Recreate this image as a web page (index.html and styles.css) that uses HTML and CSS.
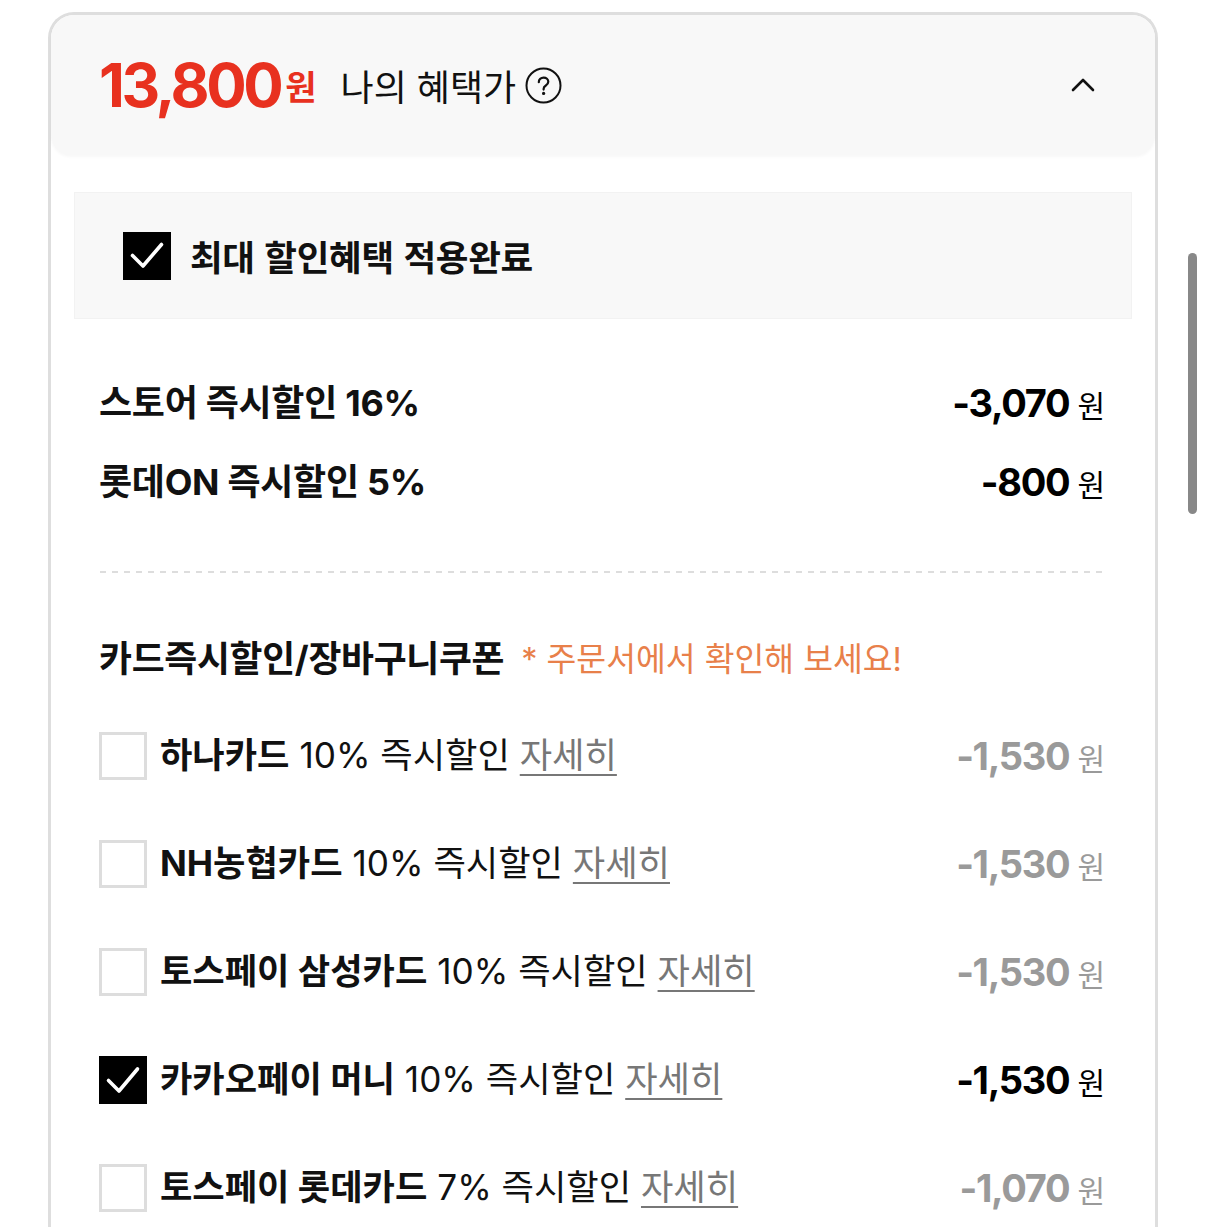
FILE: index.html
```html
<!DOCTYPE html>
<html lang="ko">
<head>
<meta charset="utf-8">
<title>나의 혜택가</title>
<link rel="stylesheet" href="styles.css">
</head>
<body>
<div class="card">
  <div class="summary">
    <span class="price"><span class="price-num">13,800</span><span class="price-won">원</span></span>
    <span class="summary-label">나의 혜택가</span>
    <svg class="help" width="37" height="37" viewBox="0 0 37 37" aria-hidden="true">
      <circle cx="18.5" cy="18.5" r="17" fill="none" stroke="#111" stroke-width="2"/>
      <path d="M13.8 15.2C13.8 12.4 15.9 10.6 18.6 10.6C21.3 10.6 23.3 12.4 23.3 14.8C23.3 16.9 22 17.9 20.6 18.8C19.3 19.6 18.6 20.4 18.6 22.1V22.6" fill="none" stroke="#111" stroke-width="2.2" stroke-linecap="round"/>
      <circle cx="18.6" cy="26.4" r="1.6" fill="#111"/>
    </svg>
    <svg class="chevron" width="26" height="16" viewBox="0 0 26 16" aria-hidden="true">
      <polyline points="3,13 13,3 23,13" fill="none" stroke="#111" stroke-width="2.6" stroke-linecap="round" stroke-linejoin="round"/>
    </svg>
  </div>

  <div class="applied">
    <span class="check check-on">
      <svg width="48" height="48" viewBox="0 0 48 48" aria-hidden="true"><polyline points="9.5,23.5 20,34 38.5,12.5" fill="none" stroke="#fff" stroke-width="3.6" stroke-linecap="round" stroke-linejoin="round"/></svg>
    </span>
    <span class="applied-text">최대 할인혜택 적용완료</span>
  </div>

  <div class="instant">
    <div class="line">
      <span class="line-name">스토어 즉시할인 16%</span>
      <span class="amount"><span class="amount-num">-3,070</span><span class="amount-won">원</span></span>
    </div>
    <div class="line">
      <span class="line-name">롯데ON 즉시할인 5%</span>
      <span class="amount"><span class="amount-num">-800</span><span class="amount-won">원</span></span>
    </div>
  </div>

  <div class="dash"></div>

  <div class="coupon-head">
    <span class="coupon-title">카드즉시할인/장바구니쿠폰</span>
    <span class="coupon-note">* 주문서에서 확인해 보세요!</span>
  </div>

  <ul class="coupons">
    <li class="coupon">
      <span class="check"></span>
      <span class="coupon-text"><b>하나카드</b> 10% 즉시할인 <span class="more">자세히</span></span>
      <span class="amount amount-off"><span class="amount-num">-1,530</span><span class="amount-won">원</span></span>
    </li>
    <li class="coupon">
      <span class="check"></span>
      <span class="coupon-text"><b>NH농협카드</b> 10% 즉시할인 <span class="more">자세히</span></span>
      <span class="amount amount-off"><span class="amount-num">-1,530</span><span class="amount-won">원</span></span>
    </li>
    <li class="coupon">
      <span class="check"></span>
      <span class="coupon-text"><b>토스페이 삼성카드</b> 10% 즉시할인 <span class="more">자세히</span></span>
      <span class="amount amount-off"><span class="amount-num">-1,530</span><span class="amount-won">원</span></span>
    </li>
    <li class="coupon">
      <span class="check check-on">
        <svg width="48" height="48" viewBox="0 0 48 48" aria-hidden="true"><polyline points="9.5,24.5 20,35 38.5,13" fill="none" stroke="#fff" stroke-width="3.6" stroke-linecap="round" stroke-linejoin="round"/></svg>
      </span>
      <span class="coupon-text"><b>카카오페이 머니</b> 10% 즉시할인 <span class="more">자세히</span></span>
      <span class="amount"><span class="amount-num">-1,530</span><span class="amount-won">원</span></span>
    </li>
    <li class="coupon">
      <span class="check"></span>
      <span class="coupon-text"><b>토스페이 롯데카드</b> 7% 즉시할인 <span class="more">자세히</span></span>
      <span class="amount amount-off"><span class="amount-num">-1,070</span><span class="amount-won">원</span></span>
    </li>
  </ul>
</div>
<div class="scrollbar"></div>
</body>
</html>
```

FILE: styles.css
```css
html, body {
  margin: 0;
  padding: 0;
}

body {
  background: #fff;
  color: #111;
  font-family: Inter, "Noto Sans CJK KR", sans-serif;
  height: 1227px;
  overflow: hidden;
}

.card {
  margin: 12px 0 0 48px;
  width: 1110px;
  box-sizing: border-box;
  border: 3px solid #dedede;
  border-bottom: none;
  border-radius: 26px 26px 0 0;
  padding-bottom: 60px;
}

/* header */
.summary {
  height: 140px;
  background: #f8f8f8;
  border-radius: 23px 23px 20px 20px;
  box-shadow: 0 2px 3px rgba(0, 0, 0, 0.03);
  display: flex;
  align-items: center;
  padding: 0 59px 0 48px;
}

.price {
  display: flex;
  align-items: center;
  color: #e8311f;
  line-height: 1;
}

.price-num {
  font-family: Inter, sans-serif;
  font-weight: 700;
  font-size: 60px;
  letter-spacing: -3.4px;
}

.price-won {
  font-family: "Noto Sans CJK KR", sans-serif;
  font-weight: 700;
  font-size: 34px;
  margin-left: 5px;
  margin-top: 2px;
}

.summary-label {
  font-family: "Noto Sans CJK KR", sans-serif;
  font-size: 36px;
  line-height: 1;
  margin-left: 24px;
}

.help {
  margin-left: 9px;
  flex: none;
}

.chevron {
  margin-left: auto;
  flex: none;
}

/* applied box */
.applied {
  margin: 38px 24px 0;
  height: 125px;
  background: #f8f8f8;
  box-shadow: 0 0 0 1px #f2f2f2;
  display: flex;
  align-items: center;
  padding-left: 48px;
}

.check {
  flex: none;
  width: 48px;
  height: 48px;
  box-sizing: border-box;
  border: 3px solid #dddddd;
  background: #fff;
  display: block;
}

.check svg {
  display: block;
}

.check-on {
  border: none;
  background: #000;
}

.applied-text {
  margin-left: 19px;
  font-family: "Noto Sans CJK KR", sans-serif;
  font-weight: 700;
  font-size: 35.5px;
  letter-spacing: -0.3px;
  line-height: 1;
}

/* instant discounts */
.instant {
  margin-top: 55px;
  padding: 0 50px 0 48px;
}

.line {
  height: 60px;
  display: flex;
  align-items: center;
  justify-content: space-between;
}

.line + .line {
  margin-top: 19px;
}

.line-name {
  font-weight: 700;
  font-size: 36px;
  letter-spacing: -0.3px;
  line-height: 1;
}

.amount {
  display: flex;
  align-items: baseline;
  line-height: 1;
  color: #000;
}

.amount-num {
  font-family: Inter, sans-serif;
  font-weight: 700;
  font-size: 38px;
  letter-spacing: -1.3px;
}

.amount-won {
  font-family: "Noto Sans CJK KR", sans-serif;
  font-size: 30px;
  margin-left: 8px;
}

.amount-off {
  color: #9a9a9a;
}

.dash {
  margin: 59px 48px 0 49px;
  height: 2px;
  background: repeating-linear-gradient(to right, #dddddd 0 6px, transparent 6px 12px);
}

/* coupons */
.coupon-head {
  margin-top: 57px;
  height: 60px;
  padding-left: 48px;
  display: flex;
  align-items: center;
  line-height: 1;
}

.coupon-title {
  font-weight: 700;
  font-size: 35.8px;
  letter-spacing: -0.3px;
}

.coupon-note {
  margin-left: 17px;
  font-size: 32.4px;
  color: #e8804a;
}

.coupons {
  list-style: none;
  margin: 12px 0 0;
  padding: 0 50px 0 48px;
}

.coupon {
  height: 108px;
  display: flex;
  align-items: center;
}

.coupon-text {
  flex: 1;
  margin-left: 13px;
  font-size: 35.2px;
  line-height: 1;
  white-space: nowrap;
}

.coupon-text b {
  font-weight: 700;
}

.more {
  color: #777;
  text-decoration: underline;
  text-decoration-thickness: 2px;
  text-underline-offset: 6px;
}

.scrollbar {
  position: fixed;
  left: 1188px;
  top: 253px;
  width: 9px;
  height: 261px;
  border-radius: 5px;
  background: #888;
}
```
